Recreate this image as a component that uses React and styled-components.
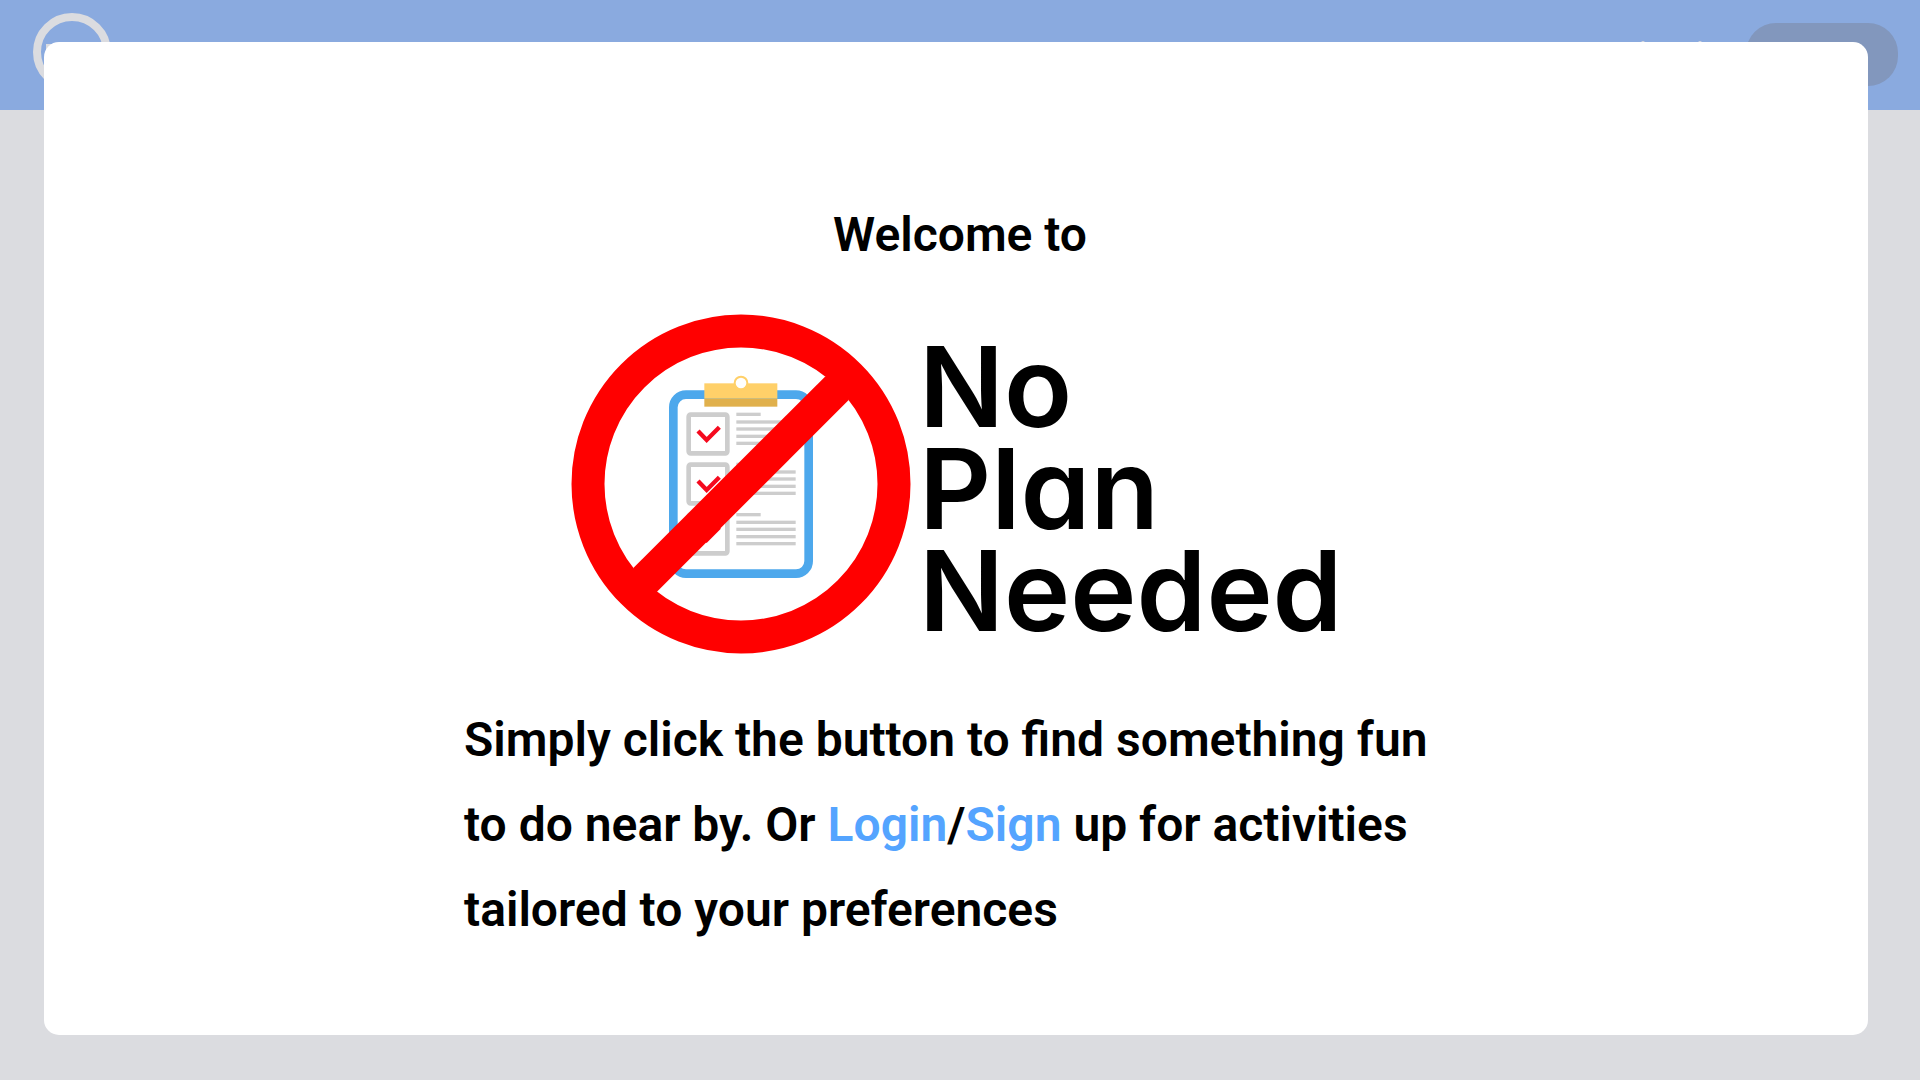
import React from "react";
import styled, { createGlobalStyle } from "styled-components";

const GlobalStyle = createGlobalStyle`
  * { box-sizing: border-box; }
  body {
    margin: 0;
    background: #dbdce0;
    color: #000;
    font-family: Roboto, "Liberation Sans", sans-serif;
  }
`;

const Header = styled.header`
  display: flex;
  align-items: flex-start;
  justify-content: space-between;
  height: 110px;
  padding: 0 22px 0 33px;
  background: #8aaadf;
`;

const BrandMark = styled.svg`
  width: 78px;
  height: 78px;
  margin-top: 13px;
`;

const Nav = styled.nav`
  display: flex;
  align-items: center;
  gap: 44px;
  margin-top: 23px;
`;

const NavMark = styled.svg`
  width: 62px;
  height: 28px;
`;

const PillButton = styled.button`
  width: 152px;
  height: 63px;
  border: 0;
  border-radius: 30px;
  background: #8297bd;
`;

const Overlay = styled.div`
  position: fixed;
  inset: 0;
  display: flex;
  padding: 42px 52px 45px 44px;
`;

const Dialog = styled.section`
  flex: 1;
  display: flex;
  flex-direction: column;
  align-items: center;
  padding: 150px 0 0 8px;
  border-radius: 15px;
  background: #fff;
`;

const Title = styled.h1`
  margin: 0;
  font-size: 48px;
  font-weight: 600;
  line-height: 85px;
`;

const Logo = styled.div`
  display: flex;
  align-items: center;
  gap: 8px;
  width: 778px;
  max-width: 100%;
  margin: 37px 0 43px;
`;

const LogoIcon = styled.svg`
  flex: none;
  width: 340px;
  height: 340px;
`;

const Wordmark = styled.div`
  padding-top: 8px;
  font-family: Inter, "Liberation Sans", sans-serif;
  font-size: 112px;
  font-weight: 600;
  line-height: 102px;
  font-feature-settings: "cv11";
`;

const Line = styled.span`
  display: block;
`;

const Intro = styled.p`
  width: 992px;
  max-width: 100%;
  margin: 0;
  font-size: 48px;
  font-weight: 600;
  line-height: 85px;
`;

const TextLink = styled.a`
  color: #54a4ff;
  text-decoration: none;
`;

const textRows = [338, 361, 382, 404, 425];

function TextBlock({ y }) {
  return textRows.map((row, i) => (
    <rect key={row} x="529" y={row + y - 1} width={i === 0 ? 73 : 178} height="10" fill="#cdcdcd" />
  ));
}

function CheckBox({ y }) {
  return (
    <g transform={`translate(0 ${y})`}>
      <rect x="386" y="343" width="116" height="116" rx="6" fill="#fff" stroke="#cdcdcd" strokeWidth="14" />
      <path d="M414 392l26 27 38-38" fill="none" stroke="#f50a1e" strokeWidth="13" />
    </g>
  );
}

function NoPlanIcon() {
  return (
    <LogoIcon viewBox="33 41 1020 1020" aria-hidden="true">
      <rect x="340" y="283" width="406" height="537" rx="38" fill="#fff" stroke="#4da8ec" strokeWidth="26" />
      <CheckBox y={0} />
      <CheckBox y={150} />
      <CheckBox y={300} />
      <TextBlock y={0} />
      <TextBlock y={150} />
      <TextBlock y={301} />
      <rect x="433" y="249" width="219" height="46" fill="#ffd069" />
      <rect x="433" y="295" width="219" height="24" fill="#e0b04c" />
      <circle cx="543" cy="248" r="19" fill="#fff" stroke="#ffd069" strokeWidth="6" />
      <circle cx="543" cy="551" r="459" fill="none" stroke="#f00" strokeWidth="99" />
      <path d="M795 229L220 803L240 870L290 875L866 299L850 225Z" fill="#f00" />
    </LogoIcon>
  );
}

export default function App() {
  return (
    <>
      <GlobalStyle />
      <Header>
        <BrandMark viewBox="0 0 78 78" aria-hidden="true">
          <circle cx="39" cy="39" r="35" fill="none" stroke="#dbdce0" strokeWidth="8" />
          <rect x="13" y="31" width="8" height="8" fill="#dbdce0" />
        </BrandMark>
        <Nav>
          <NavMark viewBox="0 0 62 28" aria-hidden="true">
            <circle cx="3" cy="2" r="2" fill="#dbdce0" />
            <circle cx="60" cy="2" r="2" fill="#dbdce0" />
          </NavMark>
          <PillButton type="button" aria-label="Account" />
        </Nav>
      </Header>
      <Overlay>
        <Dialog role="dialog" aria-modal="true" aria-labelledby="welcome-title">
          <Title id="welcome-title">Welcome to</Title>
          <Logo>
            <NoPlanIcon />
            <Wordmark>
              <Line>No</Line>
              <Line>Plan</Line>
              <Line>Needed</Line>
            </Wordmark>
          </Logo>
          <Intro>
            Simply click the button to find something fun to do near by. Or{" "}
            <TextLink href="#login">Login</TextLink>/<TextLink href="#signup">Sign</TextLink> up for
            activities tailored to your preferences
          </Intro>
        </Dialog>
      </Overlay>
    </>
  );
}
